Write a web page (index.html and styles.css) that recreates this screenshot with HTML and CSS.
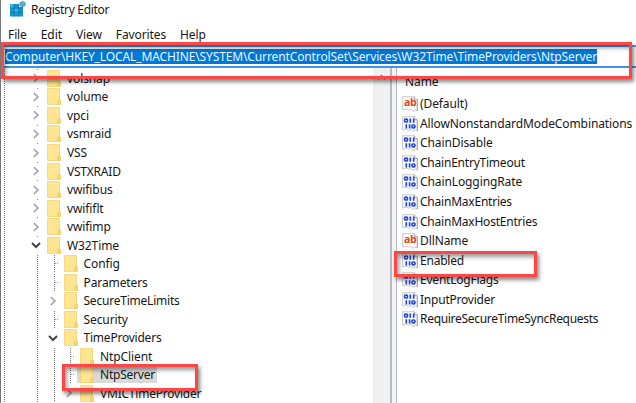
FILE: index.html
```html
<!DOCTYPE html>
<html lang="en">
<head>
<meta charset="utf-8">
<title>Registry Editor</title>
<link rel="stylesheet" href="styles.css">
</head>
<body>
<svg class="defs" aria-hidden="true">
  <symbol id="folder" viewBox="0 0 14 17"><path d="M.5.5h12v11.8h.8v4.2H.5z" fill="#ffe491" stroke="#f3d373" stroke-width=".8"/><path d="M10.6 16.2v-3.6q0-.8.8-.8h1.2q.8 0 .8.8v3.6z" fill="#f9da73" stroke="#ecc755" stroke-width=".6"/></symbol>
  <symbol id="right" viewBox="0 0 10 10"><path d="M2.8 1l4.1 4-4.1 4" fill="none" stroke="#a3a3a3" stroke-width="1.7"/></symbol>
  <symbol id="down" viewBox="0 0 10 10"><path d="M1 3l4 4 4-4" fill="none" stroke="#444" stroke-width="2"/></symbol>
  <symbol id="page" viewBox="0 0 16 16"><path d="M.6 14V.7h11.7l3 3V15l-2-1-2.2 1.3-2.4-1.8-2 .7-2.4-1.2z" fill="#fafafa" stroke="#c4c4c4" stroke-width=".9"/><path d="M12.3.7v3h3V15" fill="none" stroke="#999" stroke-width=".8"/></symbol>
  <symbol id="bin" viewBox="0 0 16 16"><use href="#page"/><g fill="none" stroke="#2448dc" stroke-width="1.7"><rect x="2.6" y="3.2" width="2.9" height="2.8" rx="1"/><path d="M8.3 2.4v4.4M11.7 2.4v4.4M4.3 8.2v4.4M7.6 8.2v4.4"/><rect x="10" y="9" width="2.9" height="2.8" rx="1"/></g></symbol>
</svg>
<div class="window">
  <header class="title">
    <svg class="logo" viewBox="0 0 17 17"><path d="M1 4h9v3h4v9.5H1z" fill="#1696cf"/><path d="M1 4h4v4H1zM5.5 8.5h4v4h-4z" fill="#35b8e6"/><path d="M1 8h13M1 12.2h13M5.2 4v12.5M9.6 4v12.5" stroke="#0875a8" stroke-width=".7"/><path d="M10.8 2.7L13.6 1.2l2.6 1.6v2.8L13.6 7l-2.8-1.5z" fill="#51b5d8" stroke="#258bb1" stroke-width=".6"/></svg>
    <span>Registry Editor</span>
  </header>
  <nav class="menu"><span>File</span><span>Edit</span><span>View</span><span>Favorites</span><span>Help</span></nav>
  <div class="address"><span>Computer\HKEY_LOCAL_MACHINE\SYSTEM\CurrentControlSet\Services\W32Time\TimeProviders\NtpServer</span></div>
  <main class="panes">
    <section class="tree">
      <div class="row top"><svg><use href="#right"/></svg><svg class="folder"><use href="#folder"/></svg><span>volsnap</span></div>
      <div class="row top"><svg><use href="#right"/></svg><svg class="folder"><use href="#folder"/></svg><span>volume</span></div>
      <div class="row top"><svg><use href="#right"/></svg><svg class="folder"><use href="#folder"/></svg><span>vpci</span></div>
      <div class="row top"><svg><use href="#right"/></svg><svg class="folder"><use href="#folder"/></svg><span>vsmraid</span></div>
      <div class="row top"><svg><use href="#right"/></svg><svg class="folder"><use href="#folder"/></svg><span>VSS</span></div>
      <div class="row top"><svg><use href="#right"/></svg><svg class="folder"><use href="#folder"/></svg><span class="snug">VSTXRAID</span></div>
      <div class="row top"><svg><use href="#right"/></svg><svg class="folder"><use href="#folder"/></svg><span>vwifibus</span></div>
      <div class="row top"><svg><use href="#right"/></svg><svg class="folder"><use href="#folder"/></svg><span>vwififlt</span></div>
      <div class="row top"><svg><use href="#right"/></svg><svg class="folder"><use href="#folder"/></svg><span>vwifimp</span></div>
      <div class="row top"><svg><use href="#down"/></svg><svg class="folder"><use href="#folder"/></svg><span>W32Time</span></div>
      <div class="branch">
        <div class="row leaf"><i></i><svg class="folder"><use href="#folder"/></svg><span>Config</span></div>
        <div class="row leaf"><i></i><svg class="folder"><use href="#folder"/></svg><span>Parameters</span></div>
        <div class="row"><svg><use href="#right"/></svg><svg class="folder"><use href="#folder"/></svg><span class="snug">SecureTimeLimits</span></div>
        <div class="row leaf"><i></i><svg class="folder"><use href="#folder"/></svg><span>Security</span></div>
        <div class="row"><svg><use href="#down"/></svg><svg class="folder"><use href="#folder"/></svg><span class="snug">TimeProviders</span></div>
        <div class="branch">
          <div class="row leaf"><i></i><svg class="folder"><use href="#folder"/></svg><span>NtpClient</span></div>
          <div class="row leaf selected"><i></i><svg class="folder"><use href="#folder"/></svg><span class="snug">NtpServer</span></div>
          <div class="row"><svg><use href="#right"/></svg><svg class="folder"><use href="#folder"/></svg><span class="snug">VMICTimeProvider</span></div>
        </div>
      </div>
    </section>
    <div class="scroll"><svg viewBox="0 0 10 8"><path d="M1 6l4-4 4 4" fill="none" stroke="#555" stroke-width="1.5"/></svg></div>
    <div class="split"></div>
    <section class="values">
      <div class="head">Name</div>
      <div class="value"><b><svg><use href="#page"/></svg><em>ab</em></b><span>(Default)</span></div>
      <div class="value"><b><svg><use href="#bin"/></svg></b><span>AllowNonstandardModeCombinations</span></div>
      <div class="value"><b><svg><use href="#bin"/></svg></b><span>ChainDisable</span></div>
      <div class="value"><b><svg><use href="#bin"/></svg></b><span class="snug">ChainEntryTimeout</span></div>
      <div class="value"><b><svg><use href="#bin"/></svg></b><span>ChainLoggingRate</span></div>
      <div class="value"><b><svg><use href="#bin"/></svg></b><span class="snug">ChainMaxEntries</span></div>
      <div class="value"><b><svg><use href="#bin"/></svg></b><span class="snug">ChainMaxHostEntries</span></div>
      <div class="value"><b><svg><use href="#page"/></svg><em>ab</em></b><span>DllName</span></div>
      <div class="value"><b><svg><use href="#bin"/></svg></b><span class="snug">Enabled</span></div>
      <div class="value"><b><svg><use href="#bin"/></svg></b><span class="snug">EventLogFlags</span></div>
      <div class="value"><b><svg><use href="#bin"/></svg></b><span class="snug">InputProvider</span></div>
      <div class="value"><b><svg><use href="#bin"/></svg></b><span class="tight">RequireSecureTimeSyncRequests</span></div>
    </section>
  </main>
  <div class="callout path-box"></div>
  <div class="callout key-box"></div>
  <div class="callout value-box"></div>
</div>
</body>
</html>
```
FILE: styles.css
```css
* { box-sizing: border-box; }
body { margin: 0; overflow: hidden; background: #fff; }
.defs { position: absolute; width: 0; height: 0; }
.window {
  position: relative;
  display: flex;
  flex-direction: column;
  width: 636px;
  height: 403px;
  overflow: hidden;
  border-left: 1px solid #77777b;
  color: #161616;
  font: 12px/18px "Noto Sans", "Open Sans", sans-serif;
  letter-spacing: -.1px;
  white-space: nowrap;
}
.snug { letter-spacing: -.22px; }
.tight { letter-spacing: -.3px; }
.title { display: flex; height: 24px; padding-left: 8px; gap: 5px; }
.title .logo { width: 17px; height: 17px; }
.title span { padding-top: 1px; line-height: 18px; letter-spacing: -.3px; }
.menu { display: flex; height: 21px; padding-left: 7px; gap: 14px; line-height: 22px; letter-spacing: -.1px; }
.address { height: 23px; padding: 2px 0 0 4px; border-top: 2px solid #4a9ede; border-bottom: 2px solid #4294dd; }
.address span { display: inline-block; height: 15px; color: #e8f4ff; background: #0078d7; line-height: 15px; letter-spacing: -.12px; vertical-align: top; }
.panes { flex: 1; display: flex; min-height: 0; }
.tree {
  width: 372px;
  padding: 1.2px 0 0 30px;
  overflow: hidden;
  background: repeating-linear-gradient(#fff 0 1px, transparent 1px 2px), linear-gradient(90deg, transparent 3px, #777 3px 4px, transparent 4px);
}
.row { display: flex; align-items: center; height: 18.52px; }
.row > svg:first-child { flex: none; width: 10px; height: 10px; }
.row .folder { flex: none; width: 14px; height: 17px; margin: 0 2px 0 6px; }
.row span { padding: 0 4px; height: 17px; line-height: 17px; }
.row.top { background: linear-gradient(#888, #888) 6px 0 / 1px 1px no-repeat; }
.branch {
  padding-left: 16.5px;
  background: repeating-linear-gradient(#fff 0 1px, transparent 1px 2px), linear-gradient(90deg, transparent 6px, #777 6px 7px, transparent 7px);
}
.leaf i {
  flex: none;
  width: 10px;
  height: 18.5px;
  background:
    repeating-linear-gradient(90deg, #999 0 1px, transparent 1px 2px) 7px 9px / 9px 1px no-repeat,
    repeating-linear-gradient(transparent 0 1px, #777 1px 2px) 6px 0 / 1px 100% no-repeat;
}
.selected { width: 110px; background: linear-gradient(#d9d9d9, #d9d9d9) 13px 1px / 80px 17px no-repeat; }
.scroll { width: 17px; padding: 6px 0 0 4px; background: #f0f0f0; }
.scroll svg { display: block; width: 9px; height: 7px; }
.split { width: 7px; border-left: 2px solid #b7b9c4; border-right: 1px solid #b4b6c2; background: #f4f4f4; }
.values { flex: 1; padding-left: 5px; }
.head { height: 26.4px; padding: 5px 0 0 3px; line-height: 18px; }
.value { display: flex; align-items: center; height: 19.57px; gap: 2px; }
.value b { position: relative; flex: none; width: 16px; height: 16px; }
.value b svg { display: block; width: 16px; height: 16px; }
.value em { position: absolute; left: 2px; top: -1px; color: #df451e; font: bold 10.5px/14px "Open Sans", sans-serif; letter-spacing: -.3px; }
.callout { position: absolute; border: 3px solid #fa4847; box-shadow: 2px 3px 4px #0007, inset 2px 3px 4px #0006; }
.path-box { left: 0; top: 42px; width: 631px; height: 37px; }
.key-box { left: 61px; top: 364px; width: 136px; height: 27px; }
.value-box { left: 393px; top: 251px; width: 143px; height: 26px; }
```
